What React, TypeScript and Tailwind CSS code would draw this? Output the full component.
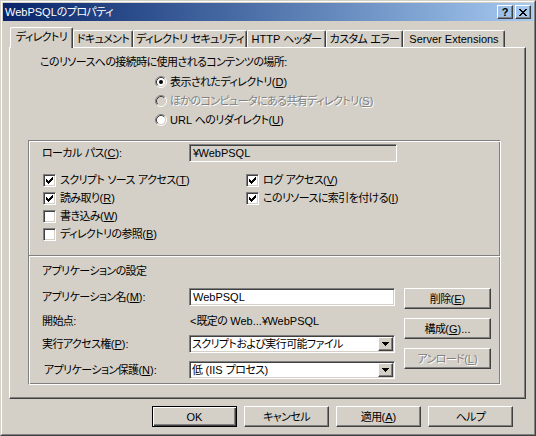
import React from 'react'

const raised = 'border border-t-white border-l-white border-r-[#404040] border-b-[#404040] shadow-[inset_-1px_-1px_#808080]'
const sunken = 'border border-t-[#808080] border-l-[#808080] border-r-white border-b-white shadow-[inset_1px_1px_#404040,inset_-1px_-1px_#d4d0c8]'
const etched = 'border border-t-[#808080] border-l-[#808080] border-r-white border-b-white shadow-[inset_1px_1px_#fff,inset_-1px_-1px_#808080]'
const grayText = 'text-[#808080] [text-shadow:1px_1px_0_#fff]'

const CHECK = ['......x', '.....xx', 'x...xxx', 'xx.xxx.', 'xxxxx..', '.xxx...', '..x....']

// latin runs keep normal spacing, japanese runs are squeezed to MS UI Gothic-ish widths
function T({ s }: { s: string }) {
  const parts = s.split(/(\(&.\)|[\x20-\x7e]+)/).filter(Boolean)
  return (
    <>
      {parts.map((p, i) => {
        if (/^\(&.\)$/.test(p)) return <span key={i} className="tracking-normal">(<u className="underline-offset-[1px]">{p[2]}</u>)</span>
        if (/^[\x20-\x7e]+$/.test(p)) return <span key={i} className="tracking-normal whitespace-pre">{p}</span>
        return <span key={i}>{p}</span>
      })}
    </>
  )
}

function Checkbox({ checked }: { checked?: boolean }) {
  return (
    <span className={`relative w-[13px] h-[13px] shrink-0 bg-white ${sunken}`}>
      {checked && (
        <svg width="7" height="7" viewBox="0 0 7 7" className="absolute left-[2px] top-[2px]" shapeRendering="crispEdges">
          {CHECK.map((row, y) => row.split('').map((c, x) => c === 'x' ? <rect key={`${x}-${y}`} x={x} y={y} width="1" height="1" fill="#000" /> : null))}
        </svg>
      )}
    </span>
  )
}

function Radio({ checked, disabled }: { checked?: boolean; disabled?: boolean }) {
  return (
    <svg width="12" height="12" viewBox="0 0 12 12" className="shrink-0">
      <circle cx="6" cy="6" r="4.2" fill={disabled ? '#d4d0c8' : '#fff'} />
      <path d="M2.11 9.89 A5.5 5.5 0 0 1 9.89 2.11" stroke="#808080" fill="none" />
      <path d="M9.89 2.11 A5.5 5.5 0 0 1 2.11 9.89" stroke="#fff" fill="none" />
      <path d="M2.82 9.18 A4.5 4.5 0 0 1 9.18 2.82" stroke="#404040" fill="none" />
      <path d="M9.18 2.82 A4.5 4.5 0 0 1 2.82 9.18" stroke="#d4d0c8" fill="none" />
      {checked && <circle cx="6" cy="6" r="2" fill="#000" />}
    </svg>
  )
}

function Btn({ s, w, disabled, isDefault }: { s: string; w: string; disabled?: boolean; isDefault?: boolean }) {
  const frame = isDefault
    ? 'border border-black shadow-[inset_1px_1px_#fff,inset_-1px_-1px_#404040,inset_-2px_-2px_#808080]'
    : raised
  return (
    <div className={`${w} h-[21px] flex items-center justify-center leading-[16px] ${frame} ${disabled ? grayText : ''}`}>
      <T s={s} />
    </div>
  )
}

function Select({ value }: { value: string }) {
  return (
    <div className={`w-[206px] h-[18px] bg-white flex items-center pl-[2px] pr-[1px] ${sunken}`}>
      <span className="flex-1 leading-[16px] whitespace-nowrap overflow-hidden"><T s={value} /></span>
      <span className={`w-[15px] h-[14px] bg-[#d4d0c8] flex items-center justify-center ${raised}`}>
        <svg width="7" height="4" viewBox="0 0 7 4" shapeRendering="crispEdges"><polygon points="0,0 7,0 3.5,4" fill="#000" /></svg>
      </span>
    </div>
  )
}

function Check({ s, checked }: { s: string; checked?: boolean }) {
  return (
    <div className="h-[18px] flex items-center gap-[4px]">
      <Checkbox checked={checked} />
      <span className="leading-[16px] whitespace-nowrap"><T s={s} /></span>
    </div>
  )
}

const tabs = [
  { label: 'ディレクトリ', w: 'w-[63px]' },
  { label: 'ドキュメント', w: 'w-[60px]' },
  { label: 'ディレクトリ セキュリティ', w: 'w-[114px]' },
  { label: 'HTTP ヘッダー', w: 'w-[79px]' },
  { label: 'カスタム エラー', w: 'w-[77px]' },
  { label: 'Server Extensions', w: 'w-[102px]' },
]

export default function App() {
  return (
    <div className="w-[536px] h-[436px] bg-[#d4d0c8] text-black text-[11px] tracking-[-0.6px] font-['Liberation_Sans','Noto_Sans_CJK_JP',sans-serif] [font-feature-settings:'palt'] border border-t-[#d4d0c8] border-l-[#d4d0c8] border-r-[#404040] border-b-[#404040]">
      <div className="h-full border border-t-white border-l-white border-r-[#808080] border-b-[#808080] p-[1px] flex flex-col">
        {/* title bar */}
        <div className="h-[18px] flex items-center bg-gradient-to-r from-[#0a246a] to-[#a6caf0] pl-[2px] pr-[2px]">
          <span className="flex-1 text-white leading-[16px]"><T s="WebPSQLのプロパティ" /></span>
          <span className={`w-[16px] h-[14px] flex items-center justify-center font-bold text-[11px] tracking-normal leading-none ${raised}`}>?</span>
          <span className={`ml-[2px] w-[16px] h-[14px] flex items-center justify-center ${raised}`}>
            <svg width="8" height="7" viewBox="0 0 8 7" shapeRendering="crispEdges">
              <path d="M0 0h2v1h-2zM6 0h2v1h-2zM1 1h2v1h-2zM5 1h2v1h-2zM2 2h4v1h-4zM3 3h2v1h-2zM2 4h4v1h-4zM1 5h2v1h-2zM5 5h2v1h-2zM0 6h2v1h-2zM6 6h2v1h-2z" fill="#000" />
            </svg>
          </span>
        </div>

        {/* tabs */}
        <div className="mt-[6px] ml-[7px] h-[21px] flex items-end">
          {tabs.map((t, i) => (
            <div
              key={t.label}
              className={`${t.w} flex items-center justify-center whitespace-nowrap leading-[16px] bg-[#d4d0c8] border-t border-l border-r border-t-white border-l-white border-r-[#404040] shadow-[inset_-1px_0_#808080] rounded-tl-[2px] rounded-tr-[2px] ${i === 0 ? 'relative z-10 h-[21px] pb-[2px]' : 'h-[17px] mb-[1px]'}`}
            >
              <T s={t.label} />
            </div>
          ))}
        </div>

        {/* panel */}
        <div className={`-mt-[1px] ml-[6px] mr-[7px] h-[352px] flex flex-col ${raised}`}>
          <div className="mt-[6px] ml-[30px] leading-[16px] whitespace-nowrap"><T s="このリソースへの接続時に使用されるコンテンツの場所:" /></div>
          <div className="mt-[2px] ml-[145px] flex flex-col">
            <div className="h-[19px] flex items-center gap-[3px]"><Radio checked /><span className="leading-[16px]"><T s="表示されたディレクトリ(&D)" /></span></div>
            <div className="h-[19px] flex items-center gap-[3px]"><Radio disabled /><span className={`leading-[16px] ${grayText}`}><T s="ほかのコンピュータにある共有ディレクトリ(&S)" /></span></div>
            <div className="h-[19px] flex items-center gap-[3px]"><Radio /><span className="leading-[16px]"><T s="URL へのリダイレクト(&U)" /></span></div>
          </div>

          <div className={`mt-[11px] ml-[18px] w-[473px] flex flex-col pb-[5px] ${etched}`}>
            <div className="mt-[3px] ml-[13px] h-[18px] flex items-center">
              <span className="w-[147px] leading-[16px]"><T s="ローカル パス(&C):" /></span>
              <span className={`w-[208px] h-[18px] pl-[3px] flex items-center leading-[16px] ${sunken}`}><T s="¥WebPSQL" /></span>
            </div>

            <div className="mt-[9px] ml-[14px] flex">
              <div className="w-[203px] flex flex-col">
                <Check checked s="スクリプト ソース アクセス(&T)" />
                <Check checked s="読み取り(&R)" />
                <Check s="書き込み(&W)" />
                <Check s="ディレクトリの参照(&B)" />
              </div>
              <div className="flex flex-col">
                <Check checked s="ログ アクセス(&V)" />
                <Check checked s="このリソースに索引を付ける(&I)" />
              </div>
            </div>

            <div className="mt-[12px] h-[2px] border-t border-b border-t-[#808080] border-b-white" />

            <div className="mt-[6px] ml-[13px] leading-[16px]"><T s="アプリケーションの設定" /></div>

            <div className="mt-[9px] ml-[13px] flex gap-[9px]">
              <div className="flex flex-col">
                <div className="h-[18px] flex items-center">
                  <span className="w-[147px] leading-[16px]"><T s="アプリケーション名(&M):" /></span>
                  <span className={`w-[206px] h-[18px] bg-white pl-[3px] flex items-center leading-[16px] ${sunken}`}><T s="WebPSQL" /></span>
                </div>
                <div className="mt-[6px] h-[18px] flex items-center">
                  <span className="w-[147px] leading-[16px]"><T s="開始点:" /></span>
                  <span className="pl-[1px] leading-[16px] whitespace-nowrap"><T s="<既定の Web...¥WebPSQL" /></span>
                </div>
                <div className="mt-[5px] h-[18px] flex items-center">
                  <span className="w-[147px] leading-[16px]"><T s="実行アクセス権(&P):" /></span>
                  <Select value="スクリプトおよび実行可能ファイル" />
                </div>
                <div className="mt-[8px] h-[18px] flex items-center">
                  <span className="w-[147px] pl-[2px] leading-[16px]"><T s="アプリケーション保護(&N):" /></span>
                  <Select value="低 (IIS プロセス)" />
                </div>
              </div>
              <div className="flex flex-col gap-[9px]">
                <Btn w="w-[87px]" s="削除(&E)" />
                <Btn w="w-[87px]" s="構成(&G)..." />
                <Btn w="w-[87px]" disabled s="アンロード(&L)" />
              </div>
            </div>
          </div>
        </div>

        {/* dialog buttons */}
        <div className="mt-[7px] pr-[20px] flex justify-end gap-[7px]">
          <Btn w="w-[85px]" isDefault s="OK" />
          <Btn w="w-[85px]" s="キャンセル" />
          <Btn w="w-[85px]" s="適用(&A)" />
          <Btn w="w-[85px]" s="ヘルプ" />
        </div>
      </div>
    </div>
  )
}
